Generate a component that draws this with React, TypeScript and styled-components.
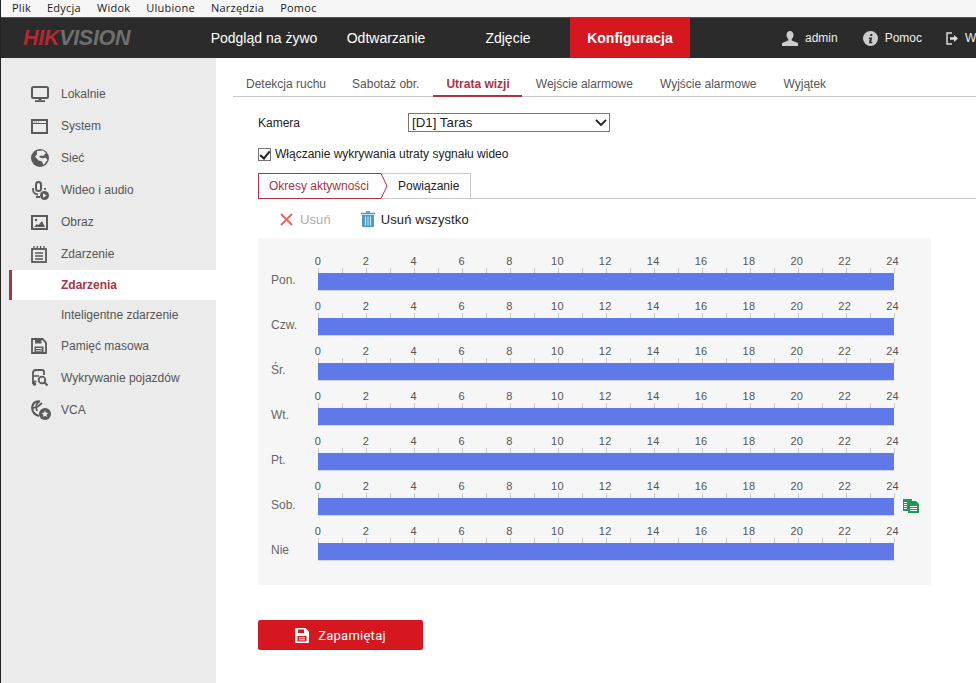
import React from "react";
import styled, { createGlobalStyle } from "styled-components";

const GlobalStyle = createGlobalStyle`
  html, body {
    margin: 0;
    padding: 0;
    background: #fff;
  }
  body {
    font-family: "Liberation Sans", Arial, sans-serif;
    font-size: 12px;
    color: #444;
  }
  * {
    box-sizing: border-box;
  }
`;

const Page = styled.div`
  width: 976px;
  height: 683px;
  overflow: hidden;
  display: flex;
  flex-direction: column;
  border-left: 1px solid #222;
`;

const BrowserMenu = styled.div`
  height: 17px;
  flex: none;
  display: flex;
  align-items: center;
  gap: 16px;
  padding: 0 0 2px 11px;
  background: #f6f6f6;
  font-family: "Open Sans", sans-serif;
  font-size: 11px;
  letter-spacing: 0.25px;
  color: #1a1a1a;
`;

const Header = styled.header`
  height: 41px;
  flex: none;
  display: flex;
  align-items: stretch;
  background: #2b2b2b;
  border-top: 1px solid #555;
  white-space: nowrap;
`;

const Logo = styled.div`
  width: 203px;
  flex: none;
  padding-left: 22px;
  align-self: center;
  font-size: 21.5px;
  font-weight: 700;
  font-style: italic;
  letter-spacing: -0.3px;
  color: #6f6f6f;

  span {
    color: #b02a30;
  }
`;

const MainNav = styled.nav`
  display: flex;
  flex: none;
  gap: 2px;
`;

const NavItem = styled.div<{ $active?: boolean }>`
  width: 120px;
  display: flex;
  align-items: center;
  justify-content: center;
  font-size: 14px;
  font-weight: ${(p) => (p.$active ? 700 : 400)};
  color: #fff;
  background: ${(p) => (p.$active ? "#d7171f" : "transparent")};
`;

const UserNav = styled.div`
  display: flex;
  flex: none;
  align-items: center;
  margin-left: 92px;
`;

const UserItem = styled.div<{ $gap: number }>`
  display: flex;
  align-items: center;
  gap: 7px;
  margin-right: ${(p) => p.$gap}px;
  font-size: 12px;
  color: #eee;
`;

const Body = styled.div`
  flex: 1;
  display: flex;
  min-height: 0;
`;

const Sidebar = styled.aside`
  width: 215px;
  flex: none;
  padding: 20px 0 0 8px;
  background: #ebebeb;
`;

const SideItem = styled.div`
  height: 32px;
  display: flex;
  align-items: center;
  gap: 13px;
  padding-left: 22px;
  color: #555;
`;

const IconSlot = styled.span`
  width: 17px;
  height: 17px;
  flex: none;
  display: flex;
  align-items: center;
  justify-content: flex-start;

  svg {
    flex: none;
  }
`;

const SubItem = styled.div<{ $active?: boolean }>`
  height: 30px;
  display: flex;
  align-items: center;
  padding-left: ${(p) => (p.$active ? 49 : 52)}px;
  color: ${(p) => (p.$active ? "#ab3342" : "#555")};
  font-weight: ${(p) => (p.$active ? 700 : 400)};
  background: ${(p) => (p.$active ? "#fff" : "transparent")};
  border-left: ${(p) => (p.$active ? "3px solid #ab3342" : "none")};
`;

const Main = styled.main`
  flex: 1;
  min-width: 0;
  padding: 12px 0 0 17px;
`;

const TabBar = styled.div`
  height: 27px;
  display: flex;
  border-bottom: 1px solid #c8c8c8;
`;

const Tab = styled.div<{ $active?: boolean }>`
  height: 27px;
  padding: ${(p) => (p.$active ? "3px 12px 0 13px" : "3px 13px 0")};
  margin-left: ${(p) => (p.$active ? 1 : 0)}px;
  display: flex;
  align-items: center;
  color: ${(p) => (p.$active ? "#ab3342" : "#555")};
  font-weight: ${(p) => (p.$active ? 700 : 400)};
  border-bottom: 2px solid ${(p) => (p.$active ? "#ab3342" : "transparent")};

  &:nth-child(n + 4) {
    margin-left: 1px;
  }
`;

const Form = styled.div`
  padding: 16px 0 0 25px;
`;

const FieldRow = styled.div`
  height: 19px;
  display: flex;
  align-items: center;
  color: #222;
`;

const FieldLabel = styled.label`
  width: 150px;
`;

const SelectWrap = styled.div`
  position: relative;
  width: 202px;
  height: 19px;
`;

const CameraSelect = styled.select`
  display: block;
  width: 100%;
  height: 19px;
  padding: 0 0 0 3px;
  appearance: none;
  border: 1px solid #767676;
  border-radius: 0;
  background: #fff;
  font-family: "Liberation Sans", Arial, sans-serif;
  font-size: 13.3px;
  color: #222;
`;

const SelectChevron = styled.svg`
  position: absolute;
  top: 6px;
  right: 3px;
  width: 12px;
  height: 7px;
  pointer-events: none;
`;

const CheckRow = styled.label`
  height: 14px;
  margin-top: 15px;
  display: flex;
  align-items: center;
  gap: 4px;
  color: #222;

  input {
    position: relative;
    width: 13px;
    height: 13px;
    margin: 0;
    appearance: none;
    background: #fff;
    border: 1px solid #767676;
  }

  input:checked::after {
    content: "";
    position: absolute;
    left: 3px;
    top: 0;
    width: 4px;
    height: 8px;
    border: solid #222;
    border-width: 0 2px 2px 0;
    transform: rotate(40deg);
  }
`;

const SubTabs = styled.div`
  height: 26px;
  margin-top: 12px;
  display: flex;
  border-bottom: 1px solid #c8c8c8;
`;

const PeriodTab = styled.div`
  position: relative;
  width: 123px;
  height: 26px;
  padding-left: 10px;
  display: flex;
  align-items: center;
  color: #ab3342;
  border: solid #ab3342;
  border-width: 1px 0 1px 1px;
`;

const TabArrow = styled.svg`
  position: absolute;
  top: -1px;
  right: -7px;
  width: 7px;
  height: 26px;
`;

const LinkTab = styled.div`
  width: 90px;
  height: 25px;
  padding-left: 17px;
  display: flex;
  align-items: center;
  color: #222;
  border: solid #c8c8c8;
  border-width: 1px 1px 0 0;
`;

const ActionRow = styled.div`
  height: 39px;
  padding: 1px 0 0 22px;
  display: flex;
  align-items: center;
`;

const Action = styled.div<{ $disabled?: boolean }>`
  display: flex;
  align-items: center;
  gap: ${(p) => (p.$disabled ? 7 : 6)}px;
  margin-right: 30px;
  font-size: 13px;
  letter-spacing: 0.1px;
  color: ${(p) => (p.$disabled ? "#aaa" : "#222")};
`;

const SchedulePanel = styled.div`
  width: 673px;
  height: 347px;
  padding-top: 8px;
  background: #f6f6f6;
`;

const DayRow = styled.div`
  height: 45px;
  display: grid;
  grid-template-columns: 60px 576px auto;
  align-items: end;
`;

const DayLabel = styled.div`
  padding: 0 0 4px 13px;
  color: #666;
`;

const Track = styled.div`
  width: 576px;
`;

const Hours = styled.div`
  height: 14px;
  margin: 0 -24px;
  display: flex;
`;

const Hour = styled.span`
  width: 47.9px;
  flex: none;
  text-align: center;
  font-size: 11px;
  letter-spacing: 0.3px;
  line-height: 14px;
  color: #555;
`;

const Ticks = styled.div`
  width: 577px;
  height: 5px;
  display: flex;
  justify-content: space-between;
`;

const Tick = styled.i`
  width: 1px;
  height: 5px;
  background: #c9c9c9;
`;

const Bar = styled.div`
  height: 18px;
  background: #5f79e8;
  border-bottom: 1px solid #ccd5f3;
`;

const CopyButton = styled.span`
  display: flex;
  margin: 0 0 3px 9px;
`;

const SaveButton = styled.button`
  width: 165px;
  height: 30px;
  margin-top: 35px;
  display: flex;
  align-items: center;
  justify-content: center;
  gap: 9px;
  border: none;
  border-radius: 2px;
  background: #d7171f;
  color: #fff;
  font-family: Roboto, "Liberation Sans", sans-serif;
  font-size: 13px;
  font-weight: 400;
  letter-spacing: 0.25px;
`;

const grey = "#5a5a5a";

const MonitorIcon = () => (
  <svg width="18" height="17" viewBox="0 0 18 17">
    <rect x="1" y="1" width="16" height="11" rx="1.5" fill="none" stroke={grey} strokeWidth="2" />
    <path d="M7.5 12h3v2h-3zM4 14.2h10V16H4z" fill={grey} />
  </svg>
);

const WindowIcon = () => (
  <svg width="17" height="15" viewBox="0 0 17 15">
    <rect x="1" y="1" width="15" height="13" fill="none" stroke={grey} strokeWidth="2" />
    <path d="M1 4.500h15" stroke={grey} />
    <path d="M3 3h6" stroke={grey} strokeDasharray="1 1" />
  </svg>
);

const GlobeIcon = () => (
  <svg width="18" height="18" viewBox="0 0 18 18">
    <circle cx="9" cy="9" r="9" fill={grey} />
    <path d="M6 2 12 1.500l3 2.500-3 3-2.500-.5L8 8l3.500 1.500 3-1 2 2.500-4 5-1.500-3.500-3.500-1-3.500-4L6 5.500z" fill="#ebebeb" />
  </svg>
);

const MicIcon = () => (
  <svg width="18" height="19" viewBox="0 0 18 19">
    <rect x="5" y="1" width="5" height="9" rx="2.5" fill="none" stroke={grey} strokeWidth="2" />
    <path d="M2 7v1.500a5 5 0 0 0 5 5M5 16h4" fill="none" stroke={grey} strokeWidth="1.800" />
    <circle cx="13.500" cy="14.500" r="4.500" fill={grey} />
    <path d="M12 12.200v4.600l3.600-2.300z" fill="#ebebeb" />
    <circle cx="14" cy="8" r="1.100" fill={grey} />
  </svg>
);

const ImageIcon = () => (
  <svg width="17" height="15" viewBox="0 0 17 15">
    <rect x="1" y="1" width="15" height="13" fill="none" stroke={grey} strokeWidth="2" />
    <circle cx="5" cy="5" r="1.200" fill={grey} />
    <path d="M3 12l3-3 1.500 1L11 6l3 6z" fill={grey} />
  </svg>
);

const CalendarIcon = () => (
  <svg width="16" height="17" viewBox="0 0 16 17">
    <rect x="1" y="3" width="14" height="13" fill="none" stroke={grey} strokeWidth="1.800" />
    <path d="M3 0v3M6.300 0v3M9.600 0v3M13 0v3M4 7h8M4 10h8M4 13h8" stroke={grey} strokeWidth="1.300" />
  </svg>
);

const StorageIcon = () => (
  <svg width="16" height="16" viewBox="0 0 16 16">
    <path d="M1 1h10.500L15 4.500V15H1z" fill="none" stroke={grey} strokeWidth="1.800" />
    <path d="M4 1.500h6.500v4H4z" fill={grey} />
    <path d="M3.500 8.500h9V15h-9z" fill={grey} />
    <path d="M5 10.500h6M5 12.800h6" stroke="#ebebeb" strokeWidth="1" />
  </svg>
);

const SaveIcon = () => (
  <svg width="14" height="15" viewBox="0 0 14 15">
    <path d="M1 0h9.500L14 3.500V14a1 1 0 0 1-1 1H1a1 1 0 0 1-1-1V1a1 1 0 0 1 1-1z" fill="#fff" />
    <path d="M3 1.500h6V5H3zM2.500 8h9v5.500h-9z" fill="#d7171f" />
    <path d="M4 9.800h6M4 11.800h6" stroke="#fff" strokeWidth="1" />
  </svg>
);

const CarSearchIcon = () => (
  <svg width="17" height="18" viewBox="0 0 17 18">
    <path d="M2 15V4a3 3 0 0 1 3-3h6a2 2 0 0 1 2 2v3" fill="none" stroke={grey} strokeWidth="1.800" />
    <path d="M2 7h6M2 12.500h3.500" stroke={grey} strokeWidth="1.600" />
    <circle cx="3.500" cy="15" r="1.800" fill={grey} />
    <circle cx="11" cy="11" r="3.300" fill="none" stroke={grey} strokeWidth="1.800" />
    <path d="M13.500 13.500l3 3" stroke={grey} strokeWidth="2" />
  </svg>
);

const VcaIcon = () => (
  <svg width="20" height="20" viewBox="0 0 20 20">
    <path d="M9 1.500C4 .5 1 4 1.200 8c.2 4 3 7 7 8" fill="none" stroke={grey} strokeWidth="2.200" />
    <path d="M8 1.500C5 4 4.500 7.500 6 11M2 8l5-1.500 4-3.500" fill="none" stroke={grey} strokeWidth="1.800" />
    <circle cx="14" cy="14" r="6" fill={grey} />
    <path d="M14 10.500l1 2.300 2.500.2-1.900 1.600.6 2.400-2.200-1.300-2.200 1.300.6-2.400-1.900-1.600 2.500-.2z" fill="#ebebeb" />
  </svg>
);

const UserIcon = () => (
  <svg width="16" height="15" viewBox="0 0 16 15">
    <path d="M8 0c2.200 0 3.500 1.700 3.500 4 0 1.700-.8 3.200-1.800 4v1.500L16 12v3H0v-3l6.300-2.500V8C5.300 7.200 4.500 5.700 4.500 4 4.500 1.700 5.800 0 8 0z" fill="#ccc" />
  </svg>
);

const InfoIcon = () => (
  <svg width="15" height="15" viewBox="0 0 15 15">
    <circle cx="7.500" cy="7.500" r="7.500" fill="#ccc" />
    <path d="M7.300 3h2v2h-2zM6 6.500h3L8.300 11h1v1.200H6l.7-4.500H6z" fill="#2b2b2b" />
  </svg>
);

const LogoutIcon = () => (
  <svg width="12" height="13" viewBox="0 0 12 13">
    <path d="M6 1H1v11h5" fill="none" stroke="#ddd" strokeWidth="1.500" />
    <path d="M4 5.300h4V3l4 3.500L8 10V7.700H4z" fill="#ddd" />
  </svg>
);

const CrossIcon = () => (
  <svg width="13" height="13" viewBox="0 0 13 13">
    <path d="M1 1l11 11M12 1L1 12" stroke="#e06a6a" strokeWidth="2" />
  </svg>
);

const TrashIcon = () => (
  <svg width="14" height="16" viewBox="0 0 14 16">
    <path d="M0 2.500h14M5 1h4" stroke="#4a9cc7" strokeWidth="1.600" />
    <path d="M1 4h12v12H1z" fill="#4a9cc7" />
    <path d="M4.500 5.500v9M7 5.500v9M9.500 5.500v9" stroke="#d4e8f2" strokeWidth="1" />
  </svg>
);

const CopyIcon = () => (
  <svg width="16" height="15" viewBox="0 0 16 15">
    <path d="M0 1h9v2H5v10H0z" fill="#1a9a52" />
    <path d="M5 3h8l3 3v9H5z" fill="#1a9a52" />
    <path d="M7 8.500h7M7 10.500h7M7 12.500h7M1 4.500h3M1 6.500h3M1 8.500h3M1 10.500h3" stroke="#fff" strokeWidth="1" />
  </svg>
);

const topItems = [
  { label: "Lokalnie", icon: <MonitorIcon /> },
  { label: "System", icon: <WindowIcon /> },
  { label: "Sieć", icon: <GlobeIcon /> },
  { label: "Wideo i audio", icon: <MicIcon /> },
  { label: "Obraz", icon: <ImageIcon /> },
  { label: "Zdarzenie", icon: <CalendarIcon /> },
];

const bottomItems = [
  { label: "Pamięć masowa", icon: <StorageIcon /> },
  { label: "Wykrywanie pojazdów", icon: <CarSearchIcon /> },
  { label: "VCA", icon: <VcaIcon /> },
];

const tabs = ["Detekcja ruchu", "Sabotaż obr.", "Utrata wizji", "Wejście alarmowe", "Wyjście alarmowe", "Wyjątek"];
const days = ["Pon.", "Czw.", "Śr.", "Wt.", "Pt.", "Sob.", "Nie"];
const hours = Array.from({ length: 13 }, (_, i) => i * 2);
const ticks = Array.from({ length: 25 }, (_, i) => i);

export default function App() {
  return (
    <Page>
      <GlobalStyle />
      <BrowserMenu>
        {["Plik", "Edycja", "Widok", "Ulubione", "Narzędzia", "Pomoc"].map((m) => (
          <span key={m}>{m}</span>
        ))}
      </BrowserMenu>
      <Header>
        <Logo>
          <span>HIK</span>VISION
        </Logo>
        <MainNav>
          <NavItem>Podgląd na żywo</NavItem>
          <NavItem>Odtwarzanie</NavItem>
          <NavItem>Zdjęcie</NavItem>
          <NavItem $active>Konfiguracja</NavItem>
        </MainNav>
        <UserNav>
          <UserItem $gap={25}>
            <UserIcon />
            admin
          </UserItem>
          <UserItem $gap={24}>
            <InfoIcon />
            Pomoc
          </UserItem>
          <UserItem $gap={0}>
            <LogoutIcon />
            Wyloguj
          </UserItem>
        </UserNav>
      </Header>
      <Body>
        <Sidebar>
          {topItems.map((item) => (
            <SideItem key={item.label}>
              <IconSlot>{item.icon}</IconSlot>
              {item.label}
            </SideItem>
          ))}
          <SubItem $active>Zdarzenia</SubItem>
          <SubItem>Inteligentne zdarzenie</SubItem>
          {bottomItems.map((item) => (
            <SideItem key={item.label}>
              <IconSlot>{item.icon}</IconSlot>
              {item.label}
            </SideItem>
          ))}
        </Sidebar>
        <Main>
          <TabBar>
            {tabs.map((t) => (
              <Tab key={t} $active={t === "Utrata wizji"}>
                {t}
              </Tab>
            ))}
          </TabBar>
          <Form>
            <FieldRow>
              <FieldLabel>Kamera</FieldLabel>
              <SelectWrap>
                <CameraSelect defaultValue="d1">
                  <option value="d1">[D1] Taras</option>
                </CameraSelect>
                <SelectChevron viewBox="0 0 12 7">
                  <path d="M1 1l5 5 5-5" fill="none" stroke="#222" strokeWidth="1.800" />
                </SelectChevron>
              </SelectWrap>
            </FieldRow>
            <CheckRow>
              <input type="checkbox" defaultChecked />
              Włączanie wykrywania utraty sygnału wideo
            </CheckRow>
            <SubTabs>
              <PeriodTab>
                Okresy aktywności
                <TabArrow viewBox="0 0 7 26">
                  <path d="M0 .5 6 13 0 25.500" fill="#fff" stroke="#ab3342" />
                </TabArrow>
              </PeriodTab>
              <LinkTab>Powiązanie</LinkTab>
            </SubTabs>
            <ActionRow>
              <Action $disabled>
                <CrossIcon />
                Usuń
              </Action>
              <Action>
                <TrashIcon />
                Usuń wszystko
              </Action>
            </ActionRow>
            <SchedulePanel>
              {days.map((day) => (
                <DayRow key={day}>
                  <DayLabel>{day}</DayLabel>
                  <Track>
                    <Hours>
                      {hours.map((h) => (
                        <Hour key={h}>{h}</Hour>
                      ))}
                    </Hours>
                    <Ticks>
                      {ticks.map((t) => (
                        <Tick key={t} />
                      ))}
                    </Ticks>
                    <Bar />
                  </Track>
                  {day === "Sob." && (
                    <CopyButton>
                      <CopyIcon />
                    </CopyButton>
                  )}
                </DayRow>
              ))}
            </SchedulePanel>
            <SaveButton>
              <SaveIcon />
              Zapamiętaj
            </SaveButton>
          </Form>
        </Main>
      </Body>
    </Page>
  );
}
